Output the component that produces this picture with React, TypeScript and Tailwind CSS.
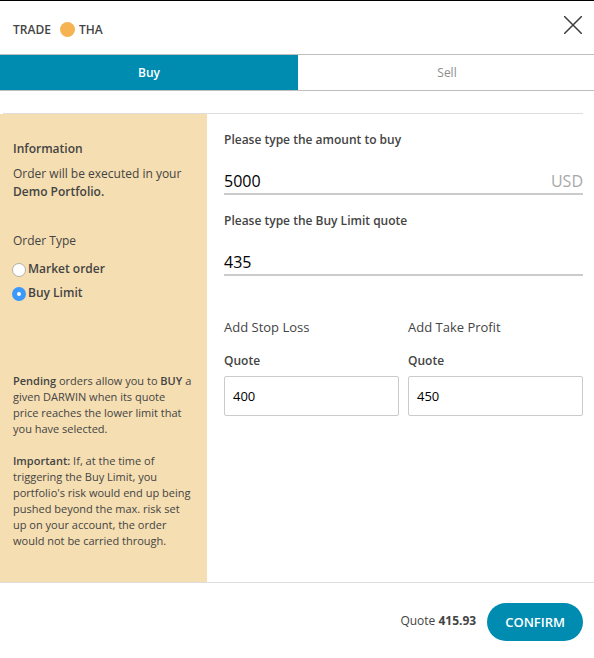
import { useState } from 'react';

type FieldProps = {
  id: string;
  label: string;
  value: string;
  onChange: (value: string) => void;
  unit?: string;
};

function UnderlinedField({ id, label, value, onChange, unit }: FieldProps) {
  return (
    <div className="flex flex-col gap-4">
      <label htmlFor={id} className="text-xs leading-5 font-semibold">
        {label}
      </label>
      <div className="flex items-center border-b-2 border-[#cbcbcb] pt-[3px] text-base leading-6">
        <input
          id={id}
          type="text"
          inputMode="decimal"
          value={value}
          onChange={(event) => onChange(event.target.value)}
          className="min-w-0 flex-1 bg-transparent text-black outline-none"
        />
        {unit && <span className="text-[#a8a8a8]">{unit}</span>}
      </div>
    </div>
  );
}

function BoxedField({ id, title, value, onChange }: { id: string; title: string; value: string; onChange: (value: string) => void }) {
  return (
    <section className="flex flex-col">
      <h3 className="mb-3.5 text-[13px] leading-5">{title}</h3>
      <label htmlFor={id} className="mb-[5px] text-xs leading-5 font-semibold">
        Quote
      </label>
      <input
        id={id}
        type="text"
        inputMode="decimal"
        value={value}
        onChange={(event) => onChange(event.target.value)}
        className="h-10 w-full rounded-xs border border-[#cbcbcb] bg-white px-2 text-[13px] text-black outline-none"
      />
    </section>
  );
}

const radioClass =
  'mt-0.5 size-3.5 shrink-0 appearance-none rounded-full border border-[#b5b0a6] bg-white checked:border-[5px] checked:border-[#3b99fc]';

export default function App() {
  const [side, setSide] = useState('buy');
  const [orderType, setOrderType] = useState('limit');
  const [amount, setAmount] = useState('5000');
  const [limit, setLimit] = useState('435');
  const [stopLoss, setStopLoss] = useState('400');
  const [takeProfit, setTakeProfit] = useState('450');

  const tabClass = (name: string) =>
    side === name
      ? 'flex-1 bg-[#008bb0] py-2 text-xs leading-[19px] font-semibold text-white'
      : 'flex-1 bg-white py-2 text-xs leading-[19px] text-[#8e8e8e]';

  return (
    <main className="overflow-x-hidden border-t border-black bg-white font-['Open_Sans',sans-serif] text-[#444444]">
      <header className="flex items-start justify-between py-[15px] pr-3 pl-[13px]">
        <h1 className="flex items-center pt-1 text-xs leading-[19px] font-semibold">
          TRADE
          <span className="mr-1 ml-[9px] size-[15px] rounded-full bg-[#f6b352]" />
          THA
        </h1>
        <button type="button" aria-label="Close">
          <svg viewBox="0 0 18 18" className="block size-[18px]" fill="none" stroke="#3d3d3d" strokeWidth="1.5">
            <path d="M0 0L18 18M18 0L0 18" />
          </svg>
        </button>
      </header>

      <div role="tablist" className="-mr-0.5 flex border-y border-[#bebebe]">
        <button type="button" role="tab" aria-selected={side === 'buy'} className={tabClass('buy')} onClick={() => setSide('buy')}>
          Buy
        </button>
        <button type="button" role="tab" aria-selected={side === 'sell'} className={tabClass('sell')} onClick={() => setSide('sell')}>
          Sell
        </button>
      </div>

      <div className="mt-[22px] mr-[11px] ml-[3px] border-t border-[#dedede]" />

      <div className="flex border-b border-[#dedede]">
        <aside className="w-[207px] shrink-0 bg-[#f5deb1] pt-[25px] pr-[15px] pb-[33px] pl-[13px]">
          <h2 className="text-xs leading-5 font-semibold">Information</h2>
          <p className="mt-1.5 text-xs leading-[18px]">
            Order will be executed in your <strong className="font-semibold">Demo Portfolio.</strong>
          </p>

          <fieldset className="mt-[30px]">
            <legend className="text-xs leading-5">Order Type</legend>
            <div className="mt-1.5 -ml-px flex flex-col text-xs leading-6 font-semibold">
              <label className="flex items-center gap-0.5">
                <input type="radio" name="order-type" className={radioClass} checked={orderType === 'market'} onChange={() => setOrderType('market')} />
                Market order
              </label>
              <label className="flex items-center gap-0.5">
                <input type="radio" name="order-type" className={radioClass} checked={orderType === 'limit'} onChange={() => setOrderType('limit')} />
                Buy Limit
              </label>
            </div>
          </fieldset>

          <div className="mt-[68px] flex flex-col gap-4 text-[11px] leading-4">
            <p>
              <strong className="font-semibold">Pending</strong> orders allow you to <strong className="font-semibold">BUY</strong> a given DARWIN when its
              quote price reaches the lower limit that you have selected.
            </p>
            <p>
              <strong className="font-semibold">Important:</strong> If, at the time of triggering the Buy Limit, you portfolio's risk would end up being
              pushed beyond the max. risk set up on your account, the order would not be carried through.
            </p>
          </div>
        </aside>

        <form className="flex min-w-0 flex-1 flex-col gap-4 pt-4 pr-[11px] pl-[17px]">
          <UnderlinedField id="amount" label="Please type the amount to buy" value={amount} onChange={setAmount} unit="USD" />
          <UnderlinedField id="limit" label="Please type the Buy Limit quote" value={limit} onChange={setLimit} />
          <div className="mt-[25px] grid grid-cols-2 gap-[9px]">
            <BoxedField id="stop-loss" title="Add Stop Loss" value={stopLoss} onChange={setStopLoss} />
            <BoxedField id="take-profit" title="Add Take Profit" value={takeProfit} onChange={setTakeProfit} />
          </div>
        </form>
      </div>

      <footer className="flex items-center justify-end gap-[11px] pt-5 pr-[11px] pb-4">
        <p className="pb-0.5 text-xs">
          Quote <strong className="font-bold">415.93</strong>
        </p>
        <button type="button" className="rounded-full bg-[#008bb0] px-[18px] py-[9px] text-[13px] leading-5 font-semibold text-white">
          CONFIRM
        </button>
      </footer>
    </main>
  );
}
